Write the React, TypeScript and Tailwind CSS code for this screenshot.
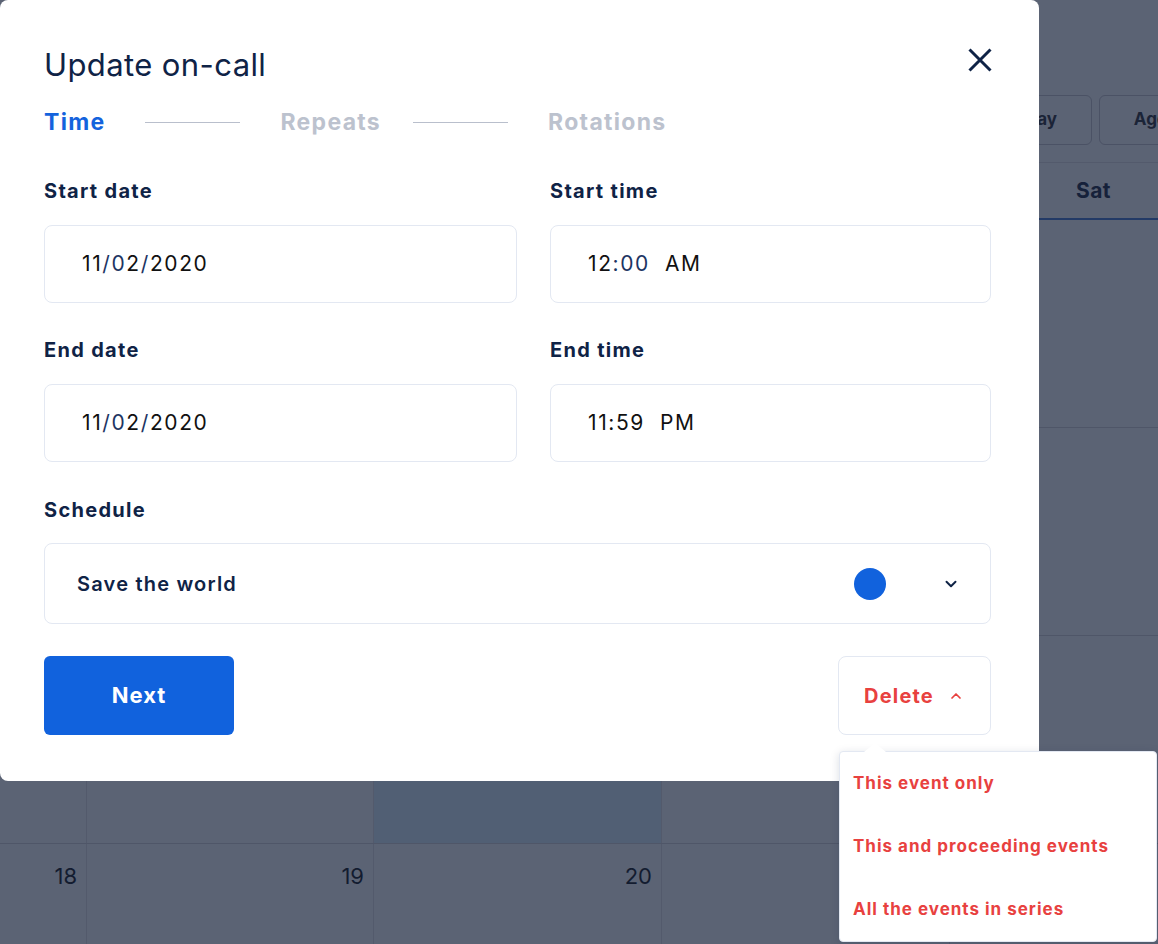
import React from 'react';
import { ChevronDown, ChevronUp } from 'lucide-react';

const font = { fontFamily: 'Inter, "Open Sans", sans-serif' };

const Field = ({ label, children }: { label: string; children: React.ReactNode }) => (
  <div className="flex flex-col">
    <div className="text-[20px] font-bold text-[#0f2346] leading-[24px] tracking-[1.3px]">{label}</div>
    <div className="mt-[22px] h-[78px] rounded-[8px] border border-[#e3e8f2] flex items-center pl-[37px] text-[21px] text-[#111] tracking-[1.6px]">
      {children}
    </div>
  </div>
);

const Calendar = () => (
  <div className="flex flex-col w-[1158px]">
    {/* toolbar */}
    <div className="h-[162px] flex gap-[7px] pl-[990px] pt-[95px]">
      <div className="w-[102px] h-[50px] rounded-[6px] border border-[#4b5265] flex items-center justify-center text-[17px] font-bold text-[#1b2437] shrink-0">Day</div>
      <div className="w-[134px] h-[50px] rounded-[6px] border border-[#4b5265] flex items-center justify-center text-[17px] font-bold text-[#1b2437] shrink-0">Agenda</div>
    </div>
    {/* header */}
    <div className="h-[58px] border-t border-[#535a6c] border-b-2 border-b-[#233a66] grid grid-cols-[87px_287px_288px_288px_287px_287px]">
      <div /><div /><div /><div />
      <div className="flex items-center justify-center text-[21px] font-bold text-[#16213a] tracking-[0.5px]">Sat</div>
      <div />
    </div>
    {[0, 1, 2, 3].map((r) => (
      <div key={r} className={`${r < 3 ? 'h-[208px] border-b' : 'h-[120px]'} border-[#4f5668] grid grid-cols-[87px_287px_288px_288px_287px_287px]`}>
        {[0, 1, 2, 3, 4, 5].map((c) => (
          <div
            key={c}
            className={`border-r border-[#535a6c] flex justify-end pr-[9px] pt-[16px] text-[22px] text-[#131c30] ${r === 2 && c === 2 ? 'bg-[#515f74]' : ''}`}
          >
            {r === 3 && c === 0 ? '18' : r === 3 && c === 1 ? '19' : r === 3 && c === 2 ? '20' : ''}
          </div>
        ))}
      </div>
    ))}
  </div>
);

export default function App() {
  return (
    <div className="relative w-[1158px] h-[944px] overflow-hidden bg-[#5b6374]" style={font}>
      <Calendar />

      {/* modal */}
      <div className="absolute left-0 top-0 w-[1039px] h-[781px] bg-white rounded-[8px] px-[44px] pt-[46px]">
        <div className="flex items-start justify-between w-[947px]">
          <h1 className="text-[31px] leading-[38px] text-[#0f2346] font-normal tracking-[0.4px]">Update on-call</h1>
          <svg width="24" height="24" viewBox="0 0 24 24" className="mt-[2px] mr-[-1px]">
            <path d="M1.5 1.5 L22.5 22.5 M22.5 1.5 L1.5 22.5" stroke="#0f2346" strokeWidth="3" />
          </svg>
        </div>

        <div className="flex items-center mt-[23px] h-[30px] text-[23px] font-bold tracking-[1.3px]">
          <span className="text-[#1463dd]">Time</span>
          <span className="ml-[40px] w-[95px] h-px bg-[#b9bfcc]" />
          <span className="ml-[40px] text-[#bcc2ce]">Repeats</span>
          <span className="ml-[32px] w-[95px] h-px bg-[#b9bfcc]" />
          <span className="ml-[40px] text-[#bcc2ce]">Rotations</span>
        </div>

        <div className="grid grid-cols-[473px_441px] gap-x-[33px] gap-y-[35px] mt-[42px]">
          <Field label="Start date">
            <span>11<span className="text-[#1d3563]">/0</span>2<span className="text-[#1d3563]">/</span>2020</span>
          </Field>
          <Field label="Start time">
            <span>12<span className="text-[#1d3563]">:00</span>&nbsp;&nbsp;AM</span>
          </Field>
          <Field label="End date">
            <span>11<span className="text-[#1d3563]">/0</span>2<span className="text-[#1d3563]">/</span>2020</span>
          </Field>
          <Field label="End time">
            <span>11:59&nbsp;&nbsp;PM</span>
          </Field>
        </div>

        <div className="mt-[36px] text-[20px] font-bold text-[#0f2346] leading-[24px] tracking-[1.3px]">Schedule</div>
        <div className="mt-[21px] w-[947px] h-[81px] rounded-[8px] border border-[#e3e8f2] flex items-center pl-[32px] pr-[30px]">
          <span className="flex-1 text-[20px] font-semibold text-[#0f2346] tracking-[1.2px]">Save the world</span>
          <span className="w-[32px] h-[32px] rounded-full bg-[#1162dd]" />
          <ChevronDown className="ml-[56px] w-[18px] h-[18px] text-[#0f2346]" strokeWidth={2.6} />
        </div>

        <div className="mt-[32px] w-[947px] flex justify-between">
          <button className="w-[190px] h-[79px] rounded-[6px] bg-[#1162dd] text-white text-[22px] font-bold tracking-[1px]">Next</button>
          <button className="w-[153px] h-[79px] rounded-[8px] border border-[#e3e8f2] flex items-center pl-[25px] text-[#e8413f] text-[20px] font-bold tracking-[1.2px]">
            Delete
            <ChevronUp className="ml-[14px] w-[16px] h-[16px]" strokeWidth={2.6} />
          </button>
        </div>
      </div>

      {/* dropdown menu */}
      <div className="absolute left-[839px] top-[751px] w-[318px] h-[191px] bg-white rounded-[4px] shadow-[0_2px_10px_rgba(15,35,70,0.15)] border border-[#e3e8f2] flex flex-col gap-[42px] pt-[21px] pl-[13px] text-[17px] leading-[21px] font-bold text-[#e8413f] tracking-[1px]">
        <div className="absolute -top-[9px] left-[24px] w-0 h-0 border-l-[11px] border-r-[11px] border-b-[9px] border-l-transparent border-r-transparent border-b-white" />
        <span>This event only</span>
        <span>This and proceeding events</span>
        <span>All the events in series</span>
      </div>
    </div>
  );
}
